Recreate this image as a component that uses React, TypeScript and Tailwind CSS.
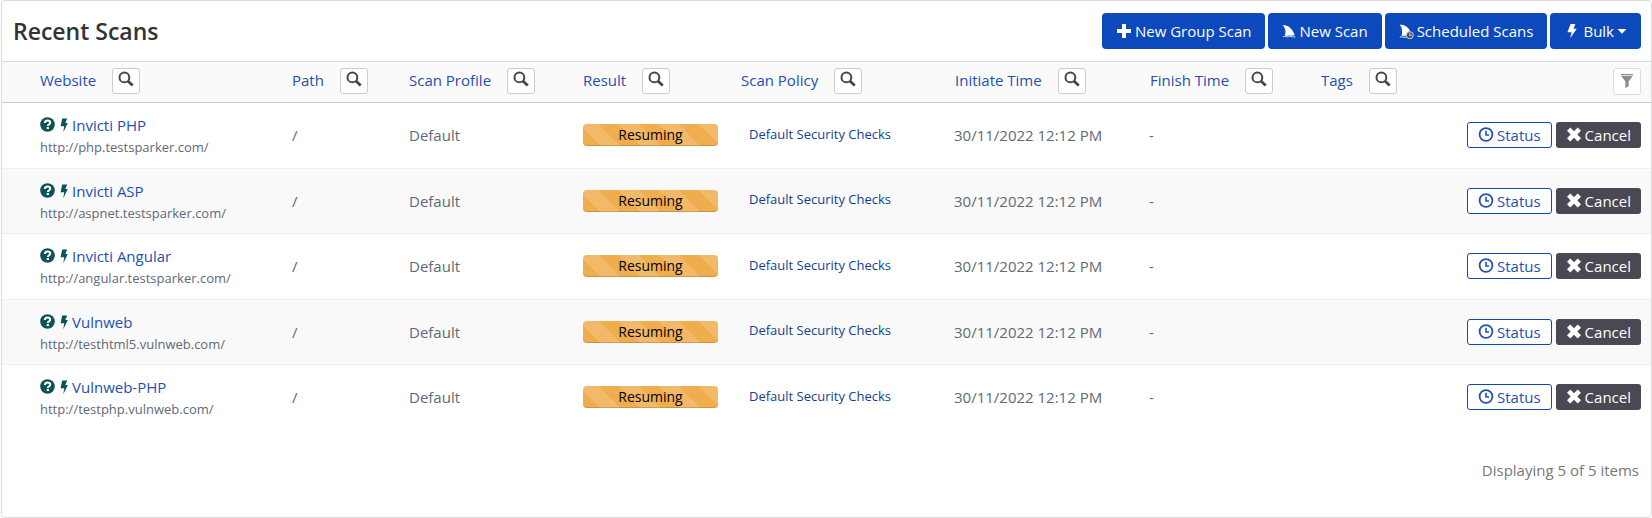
import type { ReactNode } from "react";

const columns = [
  { label: "Website", col: "w-[282px]", cell: "pl-[38px]" },
  { label: "Path", col: "w-[117px]", cell: "pl-2" },
  { label: "Scan Profile", col: "w-[174px]", cell: "pl-2" },
  { label: "Result", col: "w-[158px]", cell: "pl-2" },
  { label: "Scan Policy", col: "w-[214px]", cell: "pl-2" },
  { label: "Initiate Time", col: "w-[195px]", cell: "pl-2" },
  { label: "Finish Time", col: "w-[171px]", cell: "pl-2" },
  { label: "Tags", col: "w-[120px]", cell: "pl-2" },
];

const scans = [
  { name: "Invicti PHP", url: "http://php.testsparker.com/" },
  { name: "Invicti ASP", url: "http://aspnet.testsparker.com/" },
  { name: "Invicti Angular", url: "http://angular.testsparker.com/" },
  { name: "Vulnweb", url: "http://testhtml5.vulnweb.com/" },
  { name: "Vulnweb-PHP", url: "http://testphp.vulnweb.com/" },
];

const SearchIcon = () => (
  <svg viewBox="0 0 16 16" className="size-4" fill="none" stroke="currentColor">
    <circle cx="6.4" cy="6.4" r="4.9" strokeWidth="2" />
    <path d="M9.9 9.9l4.8 4.6" strokeWidth="2.8" />
  </svg>
);

const PlusIcon = () => (
  <svg viewBox="0 0 16 16" className="size-4" fill="currentColor">
    <path d="M6.500 1h3q.5 0 .5.5V6h4.500q.5 0 .5.5v3q0 .5-.5.5H10v4.500q0 .5-.5.5h-3q-.5 0-.5-.5V10H1.500q-.5 0-.5-.5v-3Q1 6 1.500 6H6V1.500q0-.5.5-.5z" />
  </svg>
);

const FinIcon = () => (
  <svg viewBox="0 0 14 14" className="size-3.5" fill="currentColor">
    <path d="M.6 1C6 .8 10.500 4.500 12.800 11.500c-1.300-.5-2.100.6-3.800.2-1.400-.4-2.100-.4-3.400.1-1 .3-1.800-.2-2.900-.2C4.400 8 3.300 3.800.6 1z" />
    <path d="M1 12.800c1.500-1 2.700.2 4.200 0s2.400-.7 3.900-.1c1.300.5 2.400-.3 4.300.3" fill="none" stroke="currentColor" strokeWidth=".8" />
  </svg>
);

const ScheduledFinIcon = () => (
  <svg viewBox="0 0 15 15" className="size-[15px]" fill="currentColor">
    <path d="M.8.600C6 .8 9.600 3.600 11 7.200c-2.600.1-4 2-3.800 4.600-1.700-.5-2.900.3-4.600-.1C3.700 7.500 3 3.600.8.600z" />
    <path d="M.8 13.200c1.700-1.100 3 .3 5 0l1.500.2" fill="none" stroke="currentColor" strokeWidth=".9" />
    <circle cx="10.800" cy="11.200" r="3.500" fill="#3d4963" stroke="#d6dcea" strokeWidth="1" />
    <path d="M10.800 9.200v2.200h1.800" fill="none" stroke="#ffffff" strokeWidth=".9" />
  </svg>
);

const FlashIcon = ({ className }: { className: string }) => (
  <svg viewBox="0 0 10 16" className={className} fill="currentColor">
    <path d="M3.600 1h4.800L6.500 5.800h3.300L3.200 15.300l1.400-6H.4z" />
  </svg>
);

const ThinFlashIcon = () => (
  <svg viewBox="0 0 8 16" className="h-4 w-2" fill="currentColor">
    <path d="M2.200 1.500L7.200 1.500 5.300 6h2.500L3.300 15.200l.9-6H.600z" />
  </svg>
);

const QuestionIcon = () => (
  <svg viewBox="0 0 16 16" className="size-4">
    <circle cx="7.500" cy="7.500" r="7.300" fill="currentColor" />
    <path d="M4.900 6C4.900 4.200 6 3.500 7.500 3.500s2.700.8 2.700 2.200c0 1.700-2.400 1.500-2.400 3.200" fill="none" stroke="#ffffff" strokeWidth="2" />
    <path d="M6.700 10h2.200v2.100H6.700z" fill="#ffffff" />
  </svg>
);

const ClockIcon = () => (
  <svg viewBox="0 0 16 16" className="size-4" fill="none" stroke="currentColor">
    <circle cx="8" cy="7.500" r="6.400" strokeWidth="1.800" />
    <path d="M8 3.800v4.200h3" strokeWidth="1.600" />
  </svg>
);

const RemoveIcon = () => (
  <svg viewBox="0 0 16 16" className="size-4" fill="currentColor">
    <path d="M4.300.500L8 4.200 11.700.500 15 3.800 11.300 7.500l3.700 3.700-3.300 3.300L8 10.800l-3.700 3.700L1 11.200l3.700-3.700L1 3.800z" />
  </svg>
);

const FilterIcon = () => (
  <svg viewBox="0 0 14 16" className="h-4 w-3.5" fill="currentColor">
    <path d="M1 1h12v1.200H1zM1.300 3h11.400L8.600 8.500v4.800l-3.200 2V8.500z" />
  </svg>
);

const HeaderButton = ({ children }: { children: ReactNode }) => (
  <button type="button" className="flex h-9 items-center gap-[3px] rounded bg-[#0c49bc] px-3.5 text-white">
    {children}
  </button>
);

const App = () => {
  return (
    <main className="flex min-h-screen flex-col pl-px font-['Open_Sans',sans-serif] text-[15px] leading-[22px] text-[#626978]">
      <section className="grow rounded border border-[#dcdcdc] bg-white">
        <header className="flex h-[61px] items-center justify-between border-b border-[#dcdcdc] pr-2.5 pl-[11px]">
          <h1 className="text-[23px] font-semibold text-[#333]">Recent Scans</h1>
          <div className="flex gap-[3px]">
            <HeaderButton>
              <PlusIcon />
              New Group Scan
            </HeaderButton>
            <HeaderButton>
              <FinIcon />
              New Scan
            </HeaderButton>
            <HeaderButton>
              <ScheduledFinIcon />
              Scheduled Scans
            </HeaderButton>
            <HeaderButton>
              <FlashIcon className="h-4 w-4" />
              Bulk
              <svg viewBox="0 0 10 5" className="h-[5px] w-2.5" fill="currentColor">
                <path d="M.5 0h9L5 4.800z" />
              </svg>
            </HeaderButton>
          </div>
        </header>

        <table className="w-full table-fixed">
          <thead>
            <tr className="h-10 border-b border-[#c8c8c8] bg-[#fafafa]">
              {columns.map(({ label, col, cell }) => (
                <th key={label} className={`${col} ${cell} pb-0.5 text-left font-normal`}>
                  <div className="flex items-center gap-4">
                    <a href="#" className="pb-0.5 text-[#2450b2]">{label}</a>
                    <button
                      type="button"
                      aria-label={`Search ${label}`}
                      className="flex h-[26px] w-7 items-center justify-center rounded-[3px] border border-[#ccc] bg-white pb-1 text-[#45454f]"
                    >
                      <SearchIcon />
                    </button>
                  </div>
                </th>
              ))}
              <th className="pr-2.5">
                <button
                  type="button"
                  aria-label="Filter"
                  className="ml-auto flex h-[27px] w-7 items-center justify-center rounded-[3px] border border-[#ddd] bg-white pb-0.5 text-[#8b8b93]"
                >
                  <FilterIcon />
                </button>
              </th>
            </tr>
          </thead>
          <tbody>
            {scans.map((scan) => (
              <tr
                key={scan.name}
                className="border-[#edf0f3] not-last:border-b odd:h-[66px] even:h-[65px] even:bg-[#f9f9f9]"
              >
                <td className="pt-0.5 pl-[38px]">
                  <div className="flex items-center text-[#0d5257]">
                    <QuestionIcon />
                    <span className="mx-1">
                      <ThinFlashIcon />
                    </span>
                    <a href="#" className="text-[#2450b2]">{scan.name}</a>
                  </div>
                  <div className="text-[13px]">{scan.url}</div>
                </td>
                <td className="pl-2">/</td>
                <td className="pl-2">Default</td>
                <td className="pl-2">
                  <div className="h-[22px] w-[135px] rounded bg-[#f0ad4e] bg-[linear-gradient(45deg,rgba(255,255,255,.15)_25%,transparent_25%,transparent_50%,rgba(255,255,255,.15)_50%,rgba(255,255,255,.15)_75%,transparent_75%)] bg-size-[40px_40px] bg-position-[-4px_0] text-center text-sm leading-[22px] text-black shadow-[inset_0_-1px_0_rgba(0,0,0,.15)]">
                    Resuming
                  </div>
                </td>
                <td className="pb-1 pl-4">
                  <a href="#" className="text-[13px] text-[#123f94]">Default Security Checks</a>
                </td>
                <td className="pl-[7px]">30/11/2022 12:12 PM</td>
                <td className="pl-[7px]">-</td>
                <td />
                <td className="pr-2.5">
                  <div className="flex justify-end gap-1">
                    <button
                      type="button"
                      className="flex h-[26px] items-center gap-[3px] rounded-[3px] border border-[#0c49bc] bg-white px-2.5 text-[#2450b2]"
                    >
                      <ClockIcon />
                      Status
                    </button>
                    <button
                      type="button"
                      className="flex h-[26px] items-center gap-[3px] rounded-[3px] bg-[#4a4853] px-2.5 text-white"
                    >
                      <RemoveIcon />
                      Cancel
                    </button>
                  </div>
                </td>
              </tr>
            ))}
          </tbody>
        </table>

        <p className="pt-[29px] pr-3 text-right text-[#777]">Displaying 5 of 5 items</p>
      </section>
    </main>
  );
};

export default App;
